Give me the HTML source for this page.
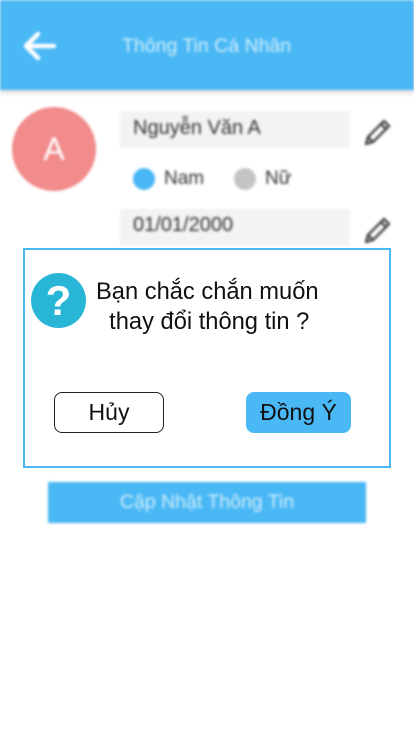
<!DOCTYPE html>
<html><head><meta charset="utf-8"><style>
*{margin:0;padding:0;box-sizing:border-box}
body{width:414px;height:736px;background:#fff;position:relative;overflow:hidden;font-family:"Liberation Sans","DejaVu Sans",sans-serif}
#bg{position:absolute;inset:0;filter:blur(1.3px)}
.a{position:absolute}
</style></head><body>
<div id="bg">
  <div class="a" style="left:0;top:0;width:414px;height:90px;background:#4ab8f5;box-shadow:0 3px 5px rgba(0,0,0,.15)"></div>
  <svg class="a" style="left:20px;top:30px" width="38" height="32" viewBox="0 0 38 32"><path d="M34 16H6M18 4L6 16l12 12" stroke="#fff" stroke-width="4.5" fill="none" stroke-linecap="round" stroke-linejoin="round"/></svg>
  <div class="a" style="left:122px;top:35px;font-size:19.5px;color:#cfeefc">Thông Tin Cá Nhân</div>
  <div class="a" style="left:12px;top:107px;width:84px;height:84px;border-radius:50%;background:#f28b8b;color:#fff;font-size:32px;text-align:center;line-height:84px">A</div>
  <div class="a" style="left:120px;top:111px;width:230px;height:37px;background:#f3f3f3;font-size:20px;color:#333;padding:6px 13px">Nguyễn Văn A</div>
  <div class="a" style="left:120px;top:209px;width:230px;height:37px;background:#f3f3f3;font-size:20px;color:#333;padding:5px 13px">01/01/2000</div>
  <svg class="a" style="left:362px;top:116px" width="32" height="32" viewBox="0 0 32 32"><path d="M4 28l2-7L22 5l5 5L11 26z M19 8l5 5 M6 21l5 5" stroke="#444" stroke-width="2.4" fill="none" stroke-linejoin="round"/></svg>
  <svg class="a" style="left:362px;top:214px" width="32" height="32" viewBox="0 0 32 32"><path d="M4 28l2-7L22 5l5 5L11 26z M19 8l5 5 M6 21l5 5" stroke="#444" stroke-width="2.4" fill="none" stroke-linejoin="round"/></svg>
  <div class="a" style="left:133px;top:168px;width:22px;height:22px;border-radius:50%;background:#4ab8f5"></div>
  <div class="a" style="left:164px;top:168px;font-size:19px;color:#333">Nam</div>
  <div class="a" style="left:234px;top:168px;width:22px;height:22px;border-radius:50%;background:#c4c4c4"></div>
  <div class="a" style="left:265px;top:168px;font-size:19px;color:#333">Nữ</div>
  <div class="a" style="left:48px;top:482px;width:318px;height:41px;background:#4ab8f5;color:#cfeefc;font-size:19.5px;text-align:center;line-height:41px">Cập Nhật Thông Tin</div>
</div>
<div class="a" style="left:23px;top:248px;width:368px;height:220px;background:#fff;border:2px solid #4ab8f5"></div>
<div class="a" style="left:31px;top:273px;width:55px;height:55px;border-radius:50%;background:#29b6d6;color:#fff;font-size:42px;font-weight:bold;text-align:center;line-height:55px">?</div>
<div class="a" style="left:96px;top:277px;font-size:23.7px;color:#111;line-height:30px;white-space:nowrap">Bạn chắc chắn muốn<br>&nbsp;&nbsp;thay đổi thông tin ?</div>
<div class="a" style="left:54px;top:392px;width:110px;height:41px;border:1.5px solid #222;border-radius:8px;font-size:23px;text-align:center;line-height:38px;color:#111">Hủy</div>
<div class="a" style="left:246px;top:392px;width:105px;height:41px;background:#4ab8f5;border-radius:8px;font-size:23px;text-align:center;line-height:41px;color:#111">Đồng Ý</div>
</body></html>
